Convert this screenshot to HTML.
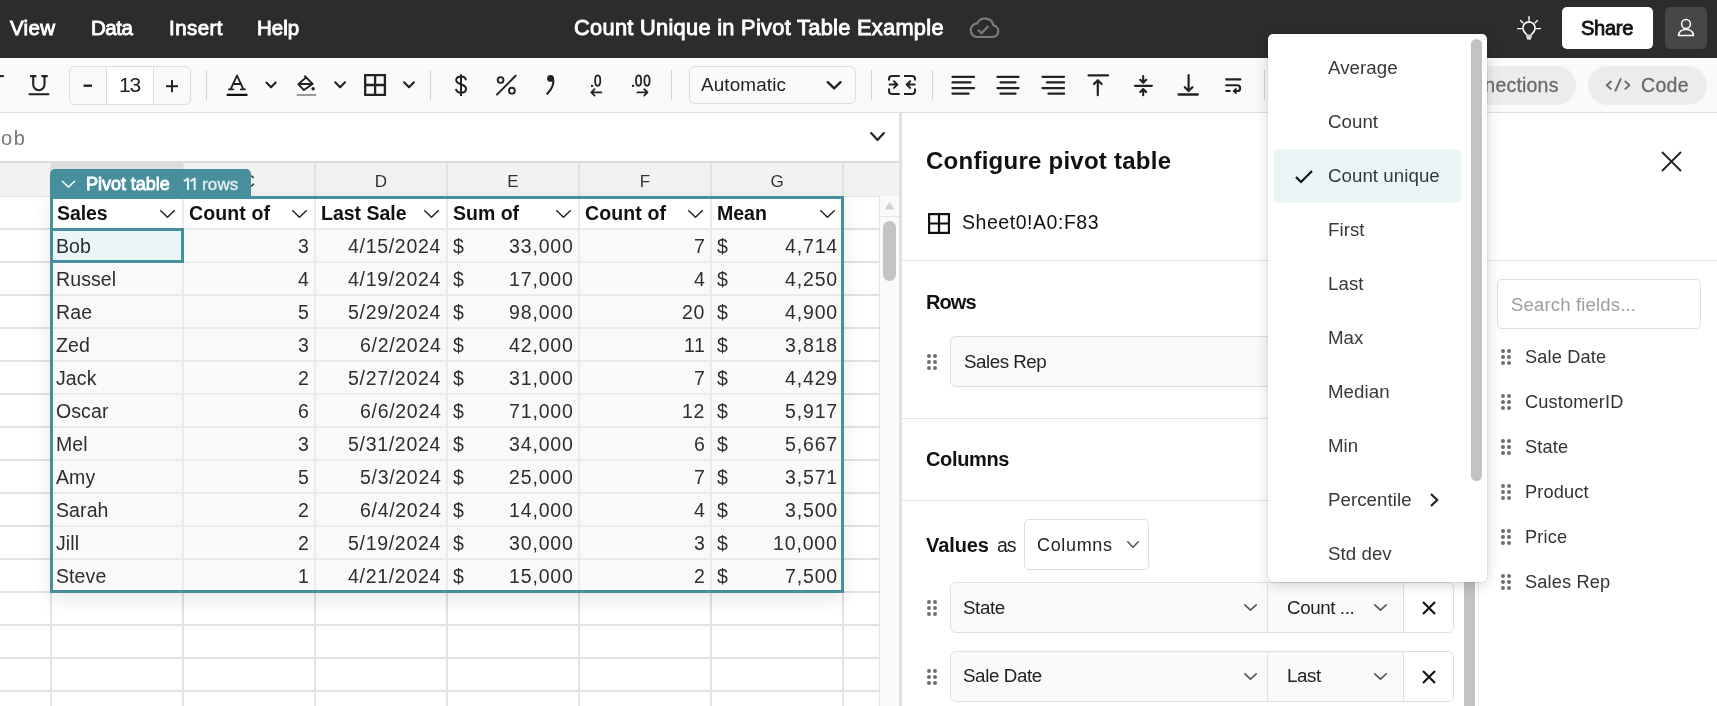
<!DOCTYPE html><html><head><meta charset="utf-8"><style>
*{margin:0;padding:0;box-sizing:border-box}
html,body{width:1717px;height:706px;overflow:hidden;background:#fff;font-family:"Liberation Sans", sans-serif;color:#1d1d1d}
.abs{position:absolute}
.t{position:absolute;white-space:nowrap;line-height:1;will-change:transform}
svg{position:absolute;overflow:visible}
</style></head><body>
<div class="abs" style="left:0px;top:0px;width:1717px;height:58px;background:#2c2c2c;"></div>
<div class="t" style="left:10.00px;top:18.00px;font-size:20.5px;color:#fff;letter-spacing:0.300px;-webkit-text-stroke:0.9px #fff">View</div>
<div class="t" style="left:91.00px;top:18.00px;font-size:20.5px;color:#fff;letter-spacing:-0.433px;-webkit-text-stroke:0.9px #fff">Data</div>
<div class="t" style="left:168.50px;top:18.00px;font-size:20.5px;color:#fff;letter-spacing:0.460px;-webkit-text-stroke:0.9px #fff">Insert</div>
<div class="t" style="left:257.00px;top:18.00px;font-size:20.5px;color:#fff;letter-spacing:-0.033px;-webkit-text-stroke:0.9px #fff">Help</div>
<div class="t" style="left:574.30px;top:17.00px;font-size:21.8px;color:#fff;letter-spacing:0.297px;-webkit-text-stroke:0.9px #fff">Count Unique in Pivot Table Example</div>
<svg style="left:0;top:0" width="1717" height="58" viewBox="0 0 1717 58"><path d="M976.5 37 H992.8 A5.9 5.9 0 0 0 993.4 25.3 A8.6 8.6 0 0 0 977.3 23.3 A6.9 6.9 0 0 0 976.5 37 Z" fill="none" stroke="#7c7c7c" stroke-width="2.2"/><path d="M978 29.8 L981.5 33.3 L988.4 26" fill="none" stroke="#7c7c7c" stroke-width="2.1"/></svg>
<div class="abs" style="left:1562px;top:7px;width:91px;height:42px;background:#fff;border-radius:5px"></div>
<div class="t" style="left:1581.00px;top:18.00px;font-size:20.2px;color:#111;letter-spacing:-0.350px;-webkit-text-stroke:0.8px #111">Share</div>
<div class="abs" style="left:1665px;top:7px;width:42px;height:42px;background:#474747;border-radius:5px"></div>
<svg style="left:0;top:0" width="1717" height="58" viewBox="0 0 1717 58"><g fill="none" stroke="#fff" stroke-width="1.6" stroke-linecap="round"><path d="M1526.6 34.6 C1524.6 32.6 1522.9 30.6 1522.9 28 A6.1 6.1 0 1 1 1535.1 28 C1535.1 30.6 1533.4 32.6 1531.4 34.6"/><path d="M1529 16.6 V20.2 M1517.6 28.6 H1521.4 M1536.6 28.6 H1540.4 M1520.6 20.6 L1522.8 22.8 M1537.4 20.6 L1535.2 22.8" stroke-width="1.4"/></g><rect x="1526.2" y="34.6" width="5.6" height="3.4" fill="#cfcfcf"/><rect x="1527" y="37.6" width="4" height="2" fill="#e8e8e8"/><g fill="none" stroke="#fff" stroke-width="1.5"><circle cx="1686" cy="24" r="4.4"/><path d="M1678.5 35.4 C1678.9 31.6 1682 29.4 1686 29.4 C1690 29.4 1693.1 31.6 1693.5 35.4 Z" stroke-linejoin="round"/></g></svg>
<div class="abs" style="left:0px;top:58px;width:1717px;height:54px;background:#fafafa;"></div>
<div class="abs" style="left:0px;top:112px;width:1717px;height:1px;background:#dedede;"></div>
<div class="abs" style="left:69px;top:66px;width:122px;height:39px;background:#f9f9f9;border:1px solid #dcdcdc;border-radius:6px"></div>
<div class="abs" style="left:106px;top:67px;width:47.5px;height:37px;background:#fff;border-left:1px solid #dcdcdc;border-right:1px solid #dcdcdc"></div>
<div class="t" style="left:118.50px;top:74.00px;font-size:21px;color:#222;letter-spacing:-1.200px">13</div>
<div class="abs" style="left:206.2px;top:70px;width:1.3px;height:30px;background:#d2d2d2;"></div>
<div class="abs" style="left:430.2px;top:70px;width:1.3px;height:30px;background:#d2d2d2;"></div>
<div class="abs" style="left:671.2px;top:70px;width:1.3px;height:30px;background:#d2d2d2;"></div>
<div class="abs" style="left:688.5px;top:66px;width:167px;height:38px;background:#fafafa;border:1px solid #dcdcdc;border-radius:6px"></div>
<div class="t" style="left:701.20px;top:76.00px;font-size:18.9px;color:#222;letter-spacing:0.125px">Automatic</div>
<div class="abs" style="left:871.2px;top:70px;width:1.3px;height:30px;background:#d2d2d2;"></div>
<div class="abs" style="left:932.2px;top:70px;width:1.3px;height:30px;background:#d2d2d2;"></div>
<div class="abs" style="left:1264.2px;top:70px;width:1.3px;height:30px;background:#d2d2d2;"></div>
<svg style="left:0;top:0" width="1717" height="113" viewBox="0 0 1717 113"><path d="M-2 76.1 H3.8" fill="none" stroke="#222" stroke-width="2.2" /><path d="M30.1 76.1 H36.4 M41.4 76.1 H47.7 M33.2 76.1 V84.6 A5.65 5.65 0 0 0 44.5 84.6 V76.1" fill="none" stroke="#222" stroke-width="2.1" /><path d="M29.4 94.2 H48.4" fill="none" stroke="#222" stroke-width="2.1" stroke-linecap="round"/><path d="M83.6 85.7 H92" fill="none" stroke="#222" stroke-width="2.4" /><path d="M166 86.2 H178 M172 80 V92.2" fill="none" stroke="#222" stroke-width="1.9" /><path d="M230.7 89.2 L237 75.6 L243.3 89.2 M233 84 H241" fill="none" stroke="#222" stroke-width="1.9" stroke-linejoin="round"/><path d="M229 89.4 H233.2 M240.8 89.4 H245" fill="none" stroke="#222" stroke-width="1.9" stroke-linecap="round"/><path d="M227.6 94.9 H246.6" fill="none" stroke="#111" stroke-width="2.2" stroke-linecap="round"/><path d="M266.4 82.6 L271.04999999999995 87.3 L275.7 82.6" fill="none" stroke="#222" stroke-width="2.1" stroke-linecap="round" stroke-linejoin="round"/><path d="M304.4 75.8 L312.6 83.9 L303.9 90.1 L298.3 84.1 L305.8 77.7 M298.3 84 H312.6" fill="none" stroke="#222" stroke-width="1.9" stroke-linejoin="round"/><circle cx="313.1" cy="88.7" r="1.7" fill="#222"/><path d="M297.5 95 H315.5" fill="none" stroke="#9a9a9a" stroke-width="2" stroke-linecap="round"/><path d="M335.2 82.3 L340.1 87.3 L345 82.3" fill="none" stroke="#222" stroke-width="2.1" stroke-linecap="round" stroke-linejoin="round"/><path d="M365.2 75.1 H384.9 V94.8 H365.2 Z M375.1 75 V95 M365 85 H385" fill="none" stroke="#222" stroke-width="2.3" /><path d="M404.1 82.3 L409.0 87.3 L413.9 82.3" fill="none" stroke="#222" stroke-width="2.1" stroke-linecap="round" stroke-linejoin="round"/><path d="M466 80.2 C465.5 77.6 463.6 76.6 461 76.6 C458 76.6 456.2 78.2 456.2 80.3 C456.2 85.3 466 83.3 466 88.9 C466 91.2 463.9 92.6 461 92.6 C458.2 92.6 456.3 91.2 456 88.8 M461 74.2 V96" fill="none" stroke="#222" stroke-width="2" /><circle cx="500.6" cy="80" r="2.9" fill="none" stroke="#222" stroke-width="1.9"/><circle cx="511.9" cy="90.7" r="2.9" fill="none" stroke="#222" stroke-width="1.9"/><path d="M497 94.6 L515.6 75.8" fill="none" stroke="#222" stroke-width="2" stroke-linecap="round"/><circle cx="550.5" cy="78.4" r="3.4" fill="#222"/><path d="M553 78 C554.5 84 552 89 547.3 93.8" fill="none" stroke="#222" stroke-width="2.1" stroke-linecap="round"/><rect x="591" y="84.8" width="2.1" height="2.1" fill="#222"/><ellipse cx="597.7" cy="80.6" rx="2.6" ry="5.3" fill="none" stroke="#222" stroke-width="1.8"/><path d="M601.3 92.4 H591.5 M594.6 89.2 L591.3 92.4 L594.6 95.6" fill="none" stroke="#222" stroke-width="1.8" stroke-linecap="round" stroke-linejoin="round"/><rect x="632" y="84.8" width="2.1" height="2.1" fill="#222"/><ellipse cx="638.6" cy="80.6" rx="2.6" ry="5.3" fill="none" stroke="#222" stroke-width="1.8"/><ellipse cx="647" cy="80.6" rx="2.6" ry="5.3" fill="none" stroke="#222" stroke-width="1.8"/><path d="M637.4 92.4 H647.4 M644.2 89.2 L647.5 92.4 L644.2 95.6" fill="none" stroke="#222" stroke-width="1.8" stroke-linecap="round" stroke-linejoin="round"/><path d="M827.8 82.2 L834.15 88.4 L840.5 82.2" fill="none" stroke="#222" stroke-width="2.4" stroke-linecap="round" stroke-linejoin="round"/><path d="M899.7 76 H892 A3 3 0 0 0 889 79 V80.5 M889 88.5 V91 A3 3 0 0 0 892 94 H899.7 M904 76 H912 A3 3 0 0 1 915 79 V80.5 M915 88.5 V91 A3 3 0 0 1 912 94 H904" fill="none" stroke="#222" stroke-width="2" /><path d="M889.6 84.6 H897.3 M894 81.3 L897.4 84.6 L894 87.9 M914.6 84.6 H906.8 M910.2 81.3 L906.7 84.6 L910.2 87.9" fill="none" stroke="#222" stroke-width="2" stroke-linecap="round" stroke-linejoin="round"/><path d="M952.5 76.8 H974" fill="none" stroke="#222" stroke-width="2.3" stroke-linecap="round"/><path d="M952.5 82.4 H970.5" fill="none" stroke="#222" stroke-width="2.3" stroke-linecap="round"/><path d="M952.5 88.1 H974" fill="none" stroke="#222" stroke-width="2.3" stroke-linecap="round"/><path d="M952.5 93.7 H968.5" fill="none" stroke="#222" stroke-width="2.3" stroke-linecap="round"/><path d="M997.5 76.8 H1018.5" fill="none" stroke="#222" stroke-width="2.3" stroke-linecap="round"/><path d="M1000.5 82.4 H1015.5" fill="none" stroke="#222" stroke-width="2.3" stroke-linecap="round"/><path d="M997.5 88.1 H1018.5" fill="none" stroke="#222" stroke-width="2.3" stroke-linecap="round"/><path d="M1000.5 93.7 H1015.5" fill="none" stroke="#222" stroke-width="2.3" stroke-linecap="round"/><path d="M1042.5 76.8 H1064" fill="none" stroke="#222" stroke-width="2.3" stroke-linecap="round"/><path d="M1047 82.4 H1064" fill="none" stroke="#222" stroke-width="2.3" stroke-linecap="round"/><path d="M1042.5 88.1 H1064" fill="none" stroke="#222" stroke-width="2.3" stroke-linecap="round"/><path d="M1048.5 93.7 H1064" fill="none" stroke="#222" stroke-width="2.3" stroke-linecap="round"/><path d="M1088.6 75.4 H1108" fill="none" stroke="#222" stroke-width="2.3" stroke-linecap="round"/><path d="M1097.8 95.2 V80.5 M1094 84 L1097.8 80.2 L1101.6 84" fill="none" stroke="#222" stroke-width="2.2" stroke-linecap="round" stroke-linejoin="round"/><path d="M1135 85.8 H1151.8" fill="none" stroke="#222" stroke-width="2.3" stroke-linecap="round"/><path d="M1143.2 76 V82.5 M1140.2 79.8 L1143.2 82.8 L1146.2 79.8 M1143.2 95.2 V89.2 M1140.2 92 L1143.2 89 L1146.2 92" fill="none" stroke="#222" stroke-width="2.1" stroke-linecap="round" stroke-linejoin="round"/><path d="M1178.6 94.5 H1197.8" fill="none" stroke="#222" stroke-width="2.3" stroke-linecap="round"/><path d="M1188.6 75 V90.8 M1184.8 87.2 L1188.6 91 L1192.4 87.2" fill="none" stroke="#222" stroke-width="2.2" stroke-linecap="round" stroke-linejoin="round"/><path d="M1226.2 79.4 H1240.4 M1226.2 85.3 H1237.3 A2.85 2.85 0 0 1 1237.3 91 H1234 M1226.2 91 H1229.8" fill="none" stroke="#222" stroke-width="2.1" stroke-linecap="round"/><path d="M1236 88.8 L1233.8 91 L1236 93.2" fill="none" stroke="#222" stroke-width="1.8" stroke-linecap="round" stroke-linejoin="round"/></svg>
<div class="abs" style="left:1380px;top:66px;width:196px;height:39px;background:#ececec;border-radius:20px"></div>
<div class="t" style="left:1448.00px;top:76.00px;font-size:19.5px;color:#6a6a6a;letter-spacing:0.200px;-webkit-text-stroke:0.3px #6a6a6a">Connections</div>
<div class="abs" style="left:1588px;top:66px;width:119px;height:39px;background:#ececec;border-radius:20px"></div>
<svg style="left:0;top:0" width="1717" height="113" viewBox="0 0 1717 113"><g fill="none" stroke="#6a6a6a" stroke-width="1.9" stroke-linejoin="round"><path d="M1611.4 81 L1606.8 85.2 L1611.4 89.4 M1624.8 81 L1629.4 85.2 L1624.8 89.4 M1621 78.4 L1615.2 91.3"/></g></svg>
<div class="t" style="left:1640.50px;top:76.00px;font-size:19.5px;color:#6a6a6a;letter-spacing:0.300px;-webkit-text-stroke:0.3px #6a6a6a">Code</div>
<div class="t" style="left:1.10px;top:128.00px;font-size:20px;color:#777;letter-spacing:1.600px">ob</div>
<svg style="left:870px;top:132px" width="15" height="9" viewBox="0 0 15 9"><path d="M1.1 1.1 L7.5 7.9 L13.9 1.1" fill="none" stroke="#222" stroke-width="2.2" stroke-linecap="round" stroke-linejoin="round"/></svg>
<div class="abs" style="left:0px;top:161px;width:899px;height:2px;background:#dcdcdc;"></div>
<div class="abs" style="left:0px;top:163px;width:899px;height:33px;background:#f2f2f2;"></div>
<div class="abs" style="left:50px;top:163px;width:132px;height:33px;background:#dcdcdc;"></div>
<div class="t" style="left:229px;width:40px;text-align:center;top:173.11px;font-size:17px;color:#333">C</div>
<div class="t" style="left:361px;width:40px;text-align:center;top:173.11px;font-size:17px;color:#333">D</div>
<div class="t" style="left:493px;width:40px;text-align:center;top:173.11px;font-size:17px;color:#333">E</div>
<div class="t" style="left:625px;width:40px;text-align:center;top:173.11px;font-size:17px;color:#333">F</div>
<div class="t" style="left:757px;width:40px;text-align:center;top:173.11px;font-size:17px;color:#333">G</div>
<div class="abs" style="left:50px;top:163px;width:1.5px;height:543px;background:#e2e2e2;"></div>
<div class="abs" style="left:182px;top:163px;width:1.5px;height:543px;background:#e2e2e2;"></div>
<div class="abs" style="left:314px;top:163px;width:1.5px;height:543px;background:#e2e2e2;"></div>
<div class="abs" style="left:446px;top:163px;width:1.5px;height:543px;background:#e2e2e2;"></div>
<div class="abs" style="left:578px;top:163px;width:1.5px;height:543px;background:#e2e2e2;"></div>
<div class="abs" style="left:710px;top:163px;width:1.5px;height:543px;background:#e2e2e2;"></div>
<div class="abs" style="left:842px;top:163px;width:1.5px;height:543px;background:#e2e2e2;"></div>
<div class="abs" style="left:0px;top:195.8px;width:879px;height:1.5px;background:#e2e2e2;"></div>
<div class="abs" style="left:0px;top:228px;width:879px;height:1.5px;background:#e2e2e2;"></div>
<div class="abs" style="left:0px;top:261px;width:879px;height:1.5px;background:#e2e2e2;"></div>
<div class="abs" style="left:0px;top:294px;width:879px;height:1.5px;background:#e2e2e2;"></div>
<div class="abs" style="left:0px;top:327px;width:879px;height:1.5px;background:#e2e2e2;"></div>
<div class="abs" style="left:0px;top:360px;width:879px;height:1.5px;background:#e2e2e2;"></div>
<div class="abs" style="left:0px;top:393px;width:879px;height:1.5px;background:#e2e2e2;"></div>
<div class="abs" style="left:0px;top:426px;width:879px;height:1.5px;background:#e2e2e2;"></div>
<div class="abs" style="left:0px;top:459px;width:879px;height:1.5px;background:#e2e2e2;"></div>
<div class="abs" style="left:0px;top:492px;width:879px;height:1.5px;background:#e2e2e2;"></div>
<div class="abs" style="left:0px;top:525px;width:879px;height:1.5px;background:#e2e2e2;"></div>
<div class="abs" style="left:0px;top:558px;width:879px;height:1.5px;background:#e2e2e2;"></div>
<div class="abs" style="left:0px;top:591px;width:879px;height:1.5px;background:#e2e2e2;"></div>
<div class="abs" style="left:0px;top:624px;width:879px;height:1.5px;background:#e2e2e2;"></div>
<div class="abs" style="left:0px;top:657px;width:879px;height:1.5px;background:#e2e2e2;"></div>
<div class="abs" style="left:0px;top:690px;width:879px;height:1.5px;background:#e2e2e2;"></div>
<div class="abs" style="left:879px;top:196px;width:20px;height:510px;background:#fafafa;border-left:1.5px solid #e2e2e2"></div>
<svg style="left:884px;top:201px" width="11" height="9" viewBox="0 0 11 9"><path d="M0.5 8.5 L5.5 1 L10.5 8.5 Z" fill="#d2d2d2"/></svg>
<div class="abs" style="left:880px;top:216px;width:19px;height:1.2px;background:#e6e6e6;"></div>
<div class="abs" style="left:883px;top:221px;width:13px;height:60px;background:#c4c4c4;border-radius:7px"></div>
<div class="abs" style="left:899px;top:113px;width:3px;height:593px;background:#e0e0e0;"></div>
<div class="abs" style="left:50px;top:196px;width:794px;height:397px;background:#f9f9f9;box-shadow:0 6px 18px rgba(0,0,0,0.10)"></div>
<div class="abs" style="left:53px;top:198px;width:788px;height:31px;background:#fff;"></div>
<div class="abs" style="left:182px;top:198px;width:1.5px;height:394px;background:#ebebeb;"></div>
<div class="abs" style="left:314px;top:198px;width:1.5px;height:394px;background:#ebebeb;"></div>
<div class="abs" style="left:446px;top:198px;width:1.5px;height:394px;background:#ebebeb;"></div>
<div class="abs" style="left:578px;top:198px;width:1.5px;height:394px;background:#ebebeb;"></div>
<div class="abs" style="left:710px;top:198px;width:1.5px;height:394px;background:#ebebeb;"></div>
<div class="abs" style="left:53px;top:261px;width:788px;height:1.5px;background:#ebebeb;"></div>
<div class="abs" style="left:53px;top:294px;width:788px;height:1.5px;background:#ebebeb;"></div>
<div class="abs" style="left:53px;top:327px;width:788px;height:1.5px;background:#ebebeb;"></div>
<div class="abs" style="left:53px;top:360px;width:788px;height:1.5px;background:#ebebeb;"></div>
<div class="abs" style="left:53px;top:393px;width:788px;height:1.5px;background:#ebebeb;"></div>
<div class="abs" style="left:53px;top:426px;width:788px;height:1.5px;background:#ebebeb;"></div>
<div class="abs" style="left:53px;top:459px;width:788px;height:1.5px;background:#ebebeb;"></div>
<div class="abs" style="left:53px;top:492px;width:788px;height:1.5px;background:#ebebeb;"></div>
<div class="abs" style="left:53px;top:525px;width:788px;height:1.5px;background:#ebebeb;"></div>
<div class="abs" style="left:53px;top:558px;width:788px;height:1.5px;background:#ebebeb;"></div>
<div class="abs" style="left:50px;top:228px;width:794px;height:1.5px;background:#ebebeb;"></div>
<div class="abs" style="left:50px;top:228px;width:133.5px;height:35px;background:#eaf5f8;border:3px solid #478f9d"></div>
<div class="abs" style="left:50px;top:196px;width:794px;height:397px;background:transparent;border:3px solid #478f9d"></div>
<div class="abs" style="left:50px;top:168.5px;width:201px;height:30px;background:#478f9d;border-radius:5px 5px 0 0"></div>
<svg style="left:61px;top:180px" width="15" height="8" viewBox="0 0 15 8"><path d="M1 1 L7.5 7 L14 1" fill="none" stroke="#fff" stroke-width="1.5"/></svg>
<div class="t" style="left:86.10px;top:175.00px;font-size:18px;color:#fff;letter-spacing:-0.035px;-webkit-text-stroke:0.85px #fff">Pivot table</div>
<svg style="left:0;top:0" width="260" height="200" viewBox="0 0 260 200"><path d="M183.8 181.2 L188 178.6 V189.9 M190.5 181.2 L194.7 178.6 V189.9" fill="none" stroke="#e6eff1" stroke-width="2.1" stroke-linejoin="round"/></svg>
<div class="t" style="left:201.70px;top:176.00px;font-size:17px;color:#e6eff1;letter-spacing:0.150px;-webkit-text-stroke:0.35px #e6eff1">rows</div>
<div class="t" style="left:56.50px;top:204.00px;font-size:19.5px;color:#111;letter-spacing:-0.100px;font-weight:bold">Sales</div>
<svg style="left:160px;top:210px" width="15" height="8" viewBox="0 0 15 8"><path d="M0.75 0.75 L7.5 7.25 L14.25 0.75" fill="none" stroke="#222" stroke-width="1.5" stroke-linecap="round" stroke-linejoin="round"/></svg>
<div class="t" style="left:188.50px;top:204.00px;font-size:19.5px;color:#111;letter-spacing:0.114px;font-weight:bold">Count of</div>
<svg style="left:292px;top:210px" width="15" height="8" viewBox="0 0 15 8"><path d="M0.75 0.75 L7.5 7.25 L14.25 0.75" fill="none" stroke="#222" stroke-width="1.5" stroke-linecap="round" stroke-linejoin="round"/></svg>
<div class="t" style="left:320.50px;top:204.00px;font-size:19.5px;color:#111;letter-spacing:0.000px;font-weight:bold">Last Sale</div>
<svg style="left:424px;top:210px" width="15" height="8" viewBox="0 0 15 8"><path d="M0.75 0.75 L7.5 7.25 L14.25 0.75" fill="none" stroke="#222" stroke-width="1.5" stroke-linecap="round" stroke-linejoin="round"/></svg>
<div class="t" style="left:452.50px;top:204.00px;font-size:19.5px;color:#111;letter-spacing:0.000px;font-weight:bold">Sum of</div>
<svg style="left:556px;top:210px" width="15" height="8" viewBox="0 0 15 8"><path d="M0.75 0.75 L7.5 7.25 L14.25 0.75" fill="none" stroke="#222" stroke-width="1.5" stroke-linecap="round" stroke-linejoin="round"/></svg>
<div class="t" style="left:584.50px;top:204.00px;font-size:19.5px;color:#111;letter-spacing:0.114px;font-weight:bold">Count of</div>
<svg style="left:688px;top:210px" width="15" height="8" viewBox="0 0 15 8"><path d="M0.75 0.75 L7.5 7.25 L14.25 0.75" fill="none" stroke="#222" stroke-width="1.5" stroke-linecap="round" stroke-linejoin="round"/></svg>
<div class="t" style="left:716.50px;top:204.00px;font-size:19.5px;color:#111;letter-spacing:0.000px;font-weight:bold">Mean</div>
<svg style="left:820px;top:210px" width="15" height="8" viewBox="0 0 15 8"><path d="M0.75 0.75 L7.5 7.25 L14.25 0.75" fill="none" stroke="#222" stroke-width="1.5" stroke-linecap="round" stroke-linejoin="round"/></svg>
<div class="t" style="left:56.00px;top:237.00px;font-size:19.5px;color:#2e2e2e;letter-spacing:0.100px">Bob</div>
<div class="t" style="right:1407.75px;top:237.00px;font-size:19.5px;color:#2e2e2e;letter-spacing:0.700px">3</div>
<div class="t" style="right:1275.95px;top:237.00px;font-size:19.5px;color:#2e2e2e;letter-spacing:0.700px">4/15/2024</div>
<div class="t" style="left:453.00px;top:237.00px;font-size:19.5px;color:#2e2e2e;letter-spacing:0.000px">$</div>
<div class="t" style="right:1143.31px;top:237.00px;font-size:19.5px;color:#2e2e2e;letter-spacing:0.850px">33,000</div>
<div class="t" style="right:1011.75px;top:237.00px;font-size:19.5px;color:#2e2e2e;letter-spacing:0.700px">7</div>
<div class="t" style="left:717.00px;top:237.00px;font-size:19.5px;color:#2e2e2e;letter-spacing:0.000px">$</div>
<div class="t" style="right:879.35px;top:237.00px;font-size:19.5px;color:#2e2e2e;letter-spacing:0.850px">4,714</div>
<div class="t" style="left:56.00px;top:270.00px;font-size:19.5px;color:#2e2e2e;letter-spacing:0.100px">Russel</div>
<div class="t" style="right:1407.75px;top:270.00px;font-size:19.5px;color:#2e2e2e;letter-spacing:0.700px">4</div>
<div class="t" style="right:1275.95px;top:270.00px;font-size:19.5px;color:#2e2e2e;letter-spacing:0.700px">4/19/2024</div>
<div class="t" style="left:453.00px;top:270.00px;font-size:19.5px;color:#2e2e2e;letter-spacing:0.000px">$</div>
<div class="t" style="right:1143.31px;top:270.00px;font-size:19.5px;color:#2e2e2e;letter-spacing:0.850px">17,000</div>
<div class="t" style="right:1011.75px;top:270.00px;font-size:19.5px;color:#2e2e2e;letter-spacing:0.700px">4</div>
<div class="t" style="left:717.00px;top:270.00px;font-size:19.5px;color:#2e2e2e;letter-spacing:0.000px">$</div>
<div class="t" style="right:879.35px;top:270.00px;font-size:19.5px;color:#2e2e2e;letter-spacing:0.850px">4,250</div>
<div class="t" style="left:56.00px;top:303.00px;font-size:19.5px;color:#2e2e2e;letter-spacing:0.100px">Rae</div>
<div class="t" style="right:1407.75px;top:303.00px;font-size:19.5px;color:#2e2e2e;letter-spacing:0.700px">5</div>
<div class="t" style="right:1275.95px;top:303.00px;font-size:19.5px;color:#2e2e2e;letter-spacing:0.700px">5/29/2024</div>
<div class="t" style="left:453.00px;top:303.00px;font-size:19.5px;color:#2e2e2e;letter-spacing:0.000px">$</div>
<div class="t" style="right:1143.31px;top:303.00px;font-size:19.5px;color:#2e2e2e;letter-spacing:0.850px">98,000</div>
<div class="t" style="right:1011.81px;top:303.00px;font-size:19.5px;color:#2e2e2e;letter-spacing:0.700px">20</div>
<div class="t" style="left:717.00px;top:303.00px;font-size:19.5px;color:#2e2e2e;letter-spacing:0.000px">$</div>
<div class="t" style="right:879.35px;top:303.00px;font-size:19.5px;color:#2e2e2e;letter-spacing:0.850px">4,900</div>
<div class="t" style="left:56.00px;top:336.00px;font-size:19.5px;color:#2e2e2e;letter-spacing:0.100px">Zed</div>
<div class="t" style="right:1407.75px;top:336.00px;font-size:19.5px;color:#2e2e2e;letter-spacing:0.700px">3</div>
<div class="t" style="right:1275.89px;top:336.00px;font-size:19.5px;color:#2e2e2e;letter-spacing:0.700px">6/2/2024</div>
<div class="t" style="left:453.00px;top:336.00px;font-size:19.5px;color:#2e2e2e;letter-spacing:0.000px">$</div>
<div class="t" style="right:1143.31px;top:336.00px;font-size:19.5px;color:#2e2e2e;letter-spacing:0.850px">42,000</div>
<div class="t" style="right:1011.76px;top:336.00px;font-size:19.5px;color:#2e2e2e;letter-spacing:0.700px">11</div>
<div class="t" style="left:717.00px;top:336.00px;font-size:19.5px;color:#2e2e2e;letter-spacing:0.000px">$</div>
<div class="t" style="right:879.35px;top:336.00px;font-size:19.5px;color:#2e2e2e;letter-spacing:0.850px">3,818</div>
<div class="t" style="left:56.00px;top:369.00px;font-size:19.5px;color:#2e2e2e;letter-spacing:0.100px">Jack</div>
<div class="t" style="right:1407.75px;top:369.00px;font-size:19.5px;color:#2e2e2e;letter-spacing:0.700px">2</div>
<div class="t" style="right:1275.95px;top:369.00px;font-size:19.5px;color:#2e2e2e;letter-spacing:0.700px">5/27/2024</div>
<div class="t" style="left:453.00px;top:369.00px;font-size:19.5px;color:#2e2e2e;letter-spacing:0.000px">$</div>
<div class="t" style="right:1143.31px;top:369.00px;font-size:19.5px;color:#2e2e2e;letter-spacing:0.850px">31,000</div>
<div class="t" style="right:1011.75px;top:369.00px;font-size:19.5px;color:#2e2e2e;letter-spacing:0.700px">7</div>
<div class="t" style="left:717.00px;top:369.00px;font-size:19.5px;color:#2e2e2e;letter-spacing:0.000px">$</div>
<div class="t" style="right:879.35px;top:369.00px;font-size:19.5px;color:#2e2e2e;letter-spacing:0.850px">4,429</div>
<div class="t" style="left:56.00px;top:402.00px;font-size:19.5px;color:#2e2e2e;letter-spacing:0.100px">Oscar</div>
<div class="t" style="right:1407.75px;top:402.00px;font-size:19.5px;color:#2e2e2e;letter-spacing:0.700px">6</div>
<div class="t" style="right:1275.89px;top:402.00px;font-size:19.5px;color:#2e2e2e;letter-spacing:0.700px">6/6/2024</div>
<div class="t" style="left:453.00px;top:402.00px;font-size:19.5px;color:#2e2e2e;letter-spacing:0.000px">$</div>
<div class="t" style="right:1143.31px;top:402.00px;font-size:19.5px;color:#2e2e2e;letter-spacing:0.850px">71,000</div>
<div class="t" style="right:1011.81px;top:402.00px;font-size:19.5px;color:#2e2e2e;letter-spacing:0.700px">12</div>
<div class="t" style="left:717.00px;top:402.00px;font-size:19.5px;color:#2e2e2e;letter-spacing:0.000px">$</div>
<div class="t" style="right:879.35px;top:402.00px;font-size:19.5px;color:#2e2e2e;letter-spacing:0.850px">5,917</div>
<div class="t" style="left:56.00px;top:435.00px;font-size:19.5px;color:#2e2e2e;letter-spacing:0.100px">Mel</div>
<div class="t" style="right:1407.75px;top:435.00px;font-size:19.5px;color:#2e2e2e;letter-spacing:0.700px">3</div>
<div class="t" style="right:1275.95px;top:435.00px;font-size:19.5px;color:#2e2e2e;letter-spacing:0.700px">5/31/2024</div>
<div class="t" style="left:453.00px;top:435.00px;font-size:19.5px;color:#2e2e2e;letter-spacing:0.000px">$</div>
<div class="t" style="right:1143.31px;top:435.00px;font-size:19.5px;color:#2e2e2e;letter-spacing:0.850px">34,000</div>
<div class="t" style="right:1011.75px;top:435.00px;font-size:19.5px;color:#2e2e2e;letter-spacing:0.700px">6</div>
<div class="t" style="left:717.00px;top:435.00px;font-size:19.5px;color:#2e2e2e;letter-spacing:0.000px">$</div>
<div class="t" style="right:879.35px;top:435.00px;font-size:19.5px;color:#2e2e2e;letter-spacing:0.850px">5,667</div>
<div class="t" style="left:56.00px;top:468.00px;font-size:19.5px;color:#2e2e2e;letter-spacing:0.100px">Amy</div>
<div class="t" style="right:1407.75px;top:468.00px;font-size:19.5px;color:#2e2e2e;letter-spacing:0.700px">5</div>
<div class="t" style="right:1275.89px;top:468.00px;font-size:19.5px;color:#2e2e2e;letter-spacing:0.700px">5/3/2024</div>
<div class="t" style="left:453.00px;top:468.00px;font-size:19.5px;color:#2e2e2e;letter-spacing:0.000px">$</div>
<div class="t" style="right:1143.31px;top:468.00px;font-size:19.5px;color:#2e2e2e;letter-spacing:0.850px">25,000</div>
<div class="t" style="right:1011.75px;top:468.00px;font-size:19.5px;color:#2e2e2e;letter-spacing:0.700px">7</div>
<div class="t" style="left:717.00px;top:468.00px;font-size:19.5px;color:#2e2e2e;letter-spacing:0.000px">$</div>
<div class="t" style="right:879.35px;top:468.00px;font-size:19.5px;color:#2e2e2e;letter-spacing:0.850px">3,571</div>
<div class="t" style="left:56.00px;top:501.00px;font-size:19.5px;color:#2e2e2e;letter-spacing:0.100px">Sarah</div>
<div class="t" style="right:1407.75px;top:501.00px;font-size:19.5px;color:#2e2e2e;letter-spacing:0.700px">2</div>
<div class="t" style="right:1275.89px;top:501.00px;font-size:19.5px;color:#2e2e2e;letter-spacing:0.700px">6/4/2024</div>
<div class="t" style="left:453.00px;top:501.00px;font-size:19.5px;color:#2e2e2e;letter-spacing:0.000px">$</div>
<div class="t" style="right:1143.31px;top:501.00px;font-size:19.5px;color:#2e2e2e;letter-spacing:0.850px">14,000</div>
<div class="t" style="right:1011.75px;top:501.00px;font-size:19.5px;color:#2e2e2e;letter-spacing:0.700px">4</div>
<div class="t" style="left:717.00px;top:501.00px;font-size:19.5px;color:#2e2e2e;letter-spacing:0.000px">$</div>
<div class="t" style="right:879.35px;top:501.00px;font-size:19.5px;color:#2e2e2e;letter-spacing:0.850px">3,500</div>
<div class="t" style="left:56.00px;top:534.00px;font-size:19.5px;color:#2e2e2e;letter-spacing:0.100px">Jill</div>
<div class="t" style="right:1407.75px;top:534.00px;font-size:19.5px;color:#2e2e2e;letter-spacing:0.700px">2</div>
<div class="t" style="right:1275.95px;top:534.00px;font-size:19.5px;color:#2e2e2e;letter-spacing:0.700px">5/19/2024</div>
<div class="t" style="left:453.00px;top:534.00px;font-size:19.5px;color:#2e2e2e;letter-spacing:0.000px">$</div>
<div class="t" style="right:1143.31px;top:534.00px;font-size:19.5px;color:#2e2e2e;letter-spacing:0.850px">30,000</div>
<div class="t" style="right:1011.75px;top:534.00px;font-size:19.5px;color:#2e2e2e;letter-spacing:0.700px">3</div>
<div class="t" style="left:717.00px;top:534.00px;font-size:19.5px;color:#2e2e2e;letter-spacing:0.000px">$</div>
<div class="t" style="right:879.31px;top:534.00px;font-size:19.5px;color:#2e2e2e;letter-spacing:0.850px">10,000</div>
<div class="t" style="left:56.00px;top:567.00px;font-size:19.5px;color:#2e2e2e;letter-spacing:0.100px">Steve</div>
<div class="t" style="right:1407.75px;top:567.00px;font-size:19.5px;color:#2e2e2e;letter-spacing:0.700px">1</div>
<div class="t" style="right:1275.95px;top:567.00px;font-size:19.5px;color:#2e2e2e;letter-spacing:0.700px">4/21/2024</div>
<div class="t" style="left:453.00px;top:567.00px;font-size:19.5px;color:#2e2e2e;letter-spacing:0.000px">$</div>
<div class="t" style="right:1143.31px;top:567.00px;font-size:19.5px;color:#2e2e2e;letter-spacing:0.850px">15,000</div>
<div class="t" style="right:1011.75px;top:567.00px;font-size:19.5px;color:#2e2e2e;letter-spacing:0.700px">2</div>
<div class="t" style="left:717.00px;top:567.00px;font-size:19.5px;color:#2e2e2e;letter-spacing:0.000px">$</div>
<div class="t" style="right:879.35px;top:567.00px;font-size:19.5px;color:#2e2e2e;letter-spacing:0.850px">7,500</div>
<div class="t" style="left:926.40px;top:149.00px;font-size:24px;color:#111;letter-spacing:0.250px;font-weight:bold">Configure pivot table</div>
<svg style="left:1661px;top:151px" width="21" height="21" viewBox="0 0 21 21"><path d="M1 1 L20 20 M20 1 L1 20" stroke="#222" stroke-width="1.8"/></svg>
<svg style="left:927.5px;top:212.5px" width="22" height="21" viewBox="0 0 22 21"><g fill="none" stroke="#111" stroke-width="2.2"><rect x="1.1" y="1.1" width="19.8" height="18.8"/><path d="M11 1 V20 M1 10.5 H21"/></g></svg>
<div class="t" style="left:962.00px;top:213.00px;font-size:19.5px;color:#111;letter-spacing:0.542px">Sheet0!A0:F83</div>
<div class="abs" style="left:902px;top:259.5px;width:815px;height:1.2px;background:#e4e4e4;"></div>
<div class="t" style="left:926.00px;top:292.00px;font-size:20px;color:#111;letter-spacing:-0.933px;font-weight:bold">Rows</div>
<svg style="left:927px;top:354px" width="11" height="16" viewBox="0 0 11 16"><g fill="#6e6e6e"><circle cx="2" cy="2" r="2"/><circle cx="8" cy="2" r="2"/><circle cx="2" cy="8" r="2"/><circle cx="8" cy="8" r="2"/><circle cx="2" cy="14" r="2"/><circle cx="8" cy="14" r="2"/></g></svg>
<div class="abs" style="left:950px;top:336px;width:503px;height:51px;background:#fafafa;border:1px solid #dedede;border-radius:6px"></div>
<div class="t" style="left:963.70px;top:353.00px;font-size:18.75px;color:#222;letter-spacing:-0.475px">Sales Rep</div>
<div class="abs" style="left:902px;top:418px;width:575px;height:1.2px;background:#e4e4e4;"></div>
<div class="t" style="left:926.00px;top:449.00px;font-size:20px;color:#111;letter-spacing:-0.350px;font-weight:bold">Columns</div>
<div class="abs" style="left:902px;top:500px;width:575px;height:1.2px;background:#e4e4e4;"></div>
<div class="t" style="left:926.00px;top:535.00px;font-size:20px;color:#111;letter-spacing:-0.080px;font-weight:bold">Values</div>
<div class="t" style="left:997.00px;top:536.00px;font-size:19.5px;color:#222;letter-spacing:-1.100px">as</div>
<div class="abs" style="left:1023.5px;top:519px;width:125px;height:51px;background:#fff;border:1px solid #dedede;border-radius:5px"></div>
<div class="t" style="left:1037.00px;top:536.00px;font-size:18px;color:#222;letter-spacing:0.667px">Columns</div>
<svg style="left:1127px;top:541px" width="12" height="7" viewBox="0 0 12 7"><path d="M0.8 0.8 L6.0 6.2 L11.2 0.8" fill="none" stroke="#555" stroke-width="1.6" stroke-linecap="round" stroke-linejoin="round"/></svg>
<svg style="left:927px;top:599.5px" width="11" height="16" viewBox="0 0 11 16"><g fill="#6e6e6e"><circle cx="2" cy="2" r="2"/><circle cx="8" cy="2" r="2"/><circle cx="2" cy="8" r="2"/><circle cx="8" cy="8" r="2"/><circle cx="2" cy="14" r="2"/><circle cx="8" cy="14" r="2"/></g></svg>
<div class="abs" style="left:950px;top:582px;width:504px;height:51px;background:#fafafa;border:1px solid #dedede;border-radius:6px"></div>
<div class="abs" style="left:1267px;top:582px;width:1px;height:51px;background:#e2e2e2;"></div>
<div class="abs" style="left:1403px;top:583px;width:50px;height:49px;background:#fff;border-left:1px solid #e2e2e2;border-radius:0 5px 5px 0"></div>
<div class="t" style="left:963.30px;top:599.00px;font-size:18.75px;color:#222;letter-spacing:-0.400px">State</div>
<svg style="left:1244px;top:604px" width="13" height="7" viewBox="0 0 13 7"><path d="M0.8 0.8 L6.5 6.2 L12.2 0.8" fill="none" stroke="#555" stroke-width="1.6" stroke-linecap="round" stroke-linejoin="round"/></svg>
<div class="t" style="left:1286.50px;top:599.00px;font-size:18.75px;color:#222;letter-spacing:-0.400px">Count ...</div>
<svg style="left:1374px;top:604px" width="13" height="7" viewBox="0 0 13 7"><path d="M0.8 0.8 L6.5 6.2 L12.2 0.8" fill="none" stroke="#555" stroke-width="1.6" stroke-linecap="round" stroke-linejoin="round"/></svg>
<svg style="left:1421.5px;top:600.5px" width="14" height="14" viewBox="0 0 14 14"><path d="M1 1 L13 13 M13 1 L1 13" stroke="#111" stroke-width="2.1"/></svg>
<svg style="left:927px;top:668.5px" width="11" height="16" viewBox="0 0 11 16"><g fill="#6e6e6e"><circle cx="2" cy="2" r="2"/><circle cx="8" cy="2" r="2"/><circle cx="2" cy="8" r="2"/><circle cx="8" cy="8" r="2"/><circle cx="2" cy="14" r="2"/><circle cx="8" cy="14" r="2"/></g></svg>
<div class="abs" style="left:950px;top:651px;width:504px;height:51px;background:#fafafa;border:1px solid #dedede;border-radius:6px"></div>
<div class="abs" style="left:1267px;top:651px;width:1px;height:51px;background:#e2e2e2;"></div>
<div class="abs" style="left:1403px;top:652px;width:50px;height:49px;background:#fff;border-left:1px solid #e2e2e2;border-radius:0 5px 5px 0"></div>
<div class="t" style="left:963.30px;top:667.00px;font-size:18.75px;color:#222;letter-spacing:-0.400px">Sale Date</div>
<svg style="left:1244px;top:673px" width="13" height="7" viewBox="0 0 13 7"><path d="M0.8 0.8 L6.5 6.2 L12.2 0.8" fill="none" stroke="#555" stroke-width="1.6" stroke-linecap="round" stroke-linejoin="round"/></svg>
<div class="t" style="left:1286.50px;top:667.00px;font-size:18.75px;color:#222;letter-spacing:-0.400px">Last</div>
<svg style="left:1374px;top:673px" width="13" height="7" viewBox="0 0 13 7"><path d="M0.8 0.8 L6.5 6.2 L12.2 0.8" fill="none" stroke="#555" stroke-width="1.6" stroke-linecap="round" stroke-linejoin="round"/></svg>
<svg style="left:1421.5px;top:669.5px" width="14" height="14" viewBox="0 0 14 14"><path d="M1 1 L13 13 M13 1 L1 13" stroke="#111" stroke-width="2.1"/></svg>
<div class="abs" style="left:1464px;top:420px;width:10.5px;height:286px;background:#c2c2c2;"></div>
<div class="abs" style="left:1477.5px;top:260px;width:1px;height:446px;background:#ececec;"></div>
<div class="abs" style="left:1497px;top:279px;width:204px;height:50px;background:#fff;border:1px solid #dedede;border-radius:5px"></div>
<div class="t" style="left:1511.40px;top:296.00px;font-size:18.5px;color:#9e9e9e;letter-spacing:0.173px">Search fields...</div>
<svg style="left:1501px;top:348.9px" width="11" height="16" viewBox="0 0 11 16"><g fill="#6e6e6e"><circle cx="2" cy="2" r="2"/><circle cx="8" cy="2" r="2"/><circle cx="2" cy="8" r="2"/><circle cx="8" cy="8" r="2"/><circle cx="2" cy="14" r="2"/><circle cx="8" cy="14" r="2"/></g></svg>
<div class="t" style="left:1524.70px;top:348.00px;font-size:18.2px;color:#333;letter-spacing:0.150px">Sale Date</div>
<svg style="left:1501px;top:393.9px" width="11" height="16" viewBox="0 0 11 16"><g fill="#6e6e6e"><circle cx="2" cy="2" r="2"/><circle cx="8" cy="2" r="2"/><circle cx="2" cy="8" r="2"/><circle cx="8" cy="8" r="2"/><circle cx="2" cy="14" r="2"/><circle cx="8" cy="14" r="2"/></g></svg>
<div class="t" style="left:1524.70px;top:393.00px;font-size:18.2px;color:#333;letter-spacing:0.150px">CustomerID</div>
<svg style="left:1501px;top:438.9px" width="11" height="16" viewBox="0 0 11 16"><g fill="#6e6e6e"><circle cx="2" cy="2" r="2"/><circle cx="8" cy="2" r="2"/><circle cx="2" cy="8" r="2"/><circle cx="8" cy="8" r="2"/><circle cx="2" cy="14" r="2"/><circle cx="8" cy="14" r="2"/></g></svg>
<div class="t" style="left:1524.70px;top:438.00px;font-size:18.2px;color:#333;letter-spacing:0.150px">State</div>
<svg style="left:1501px;top:483.9px" width="11" height="16" viewBox="0 0 11 16"><g fill="#6e6e6e"><circle cx="2" cy="2" r="2"/><circle cx="8" cy="2" r="2"/><circle cx="2" cy="8" r="2"/><circle cx="8" cy="8" r="2"/><circle cx="2" cy="14" r="2"/><circle cx="8" cy="14" r="2"/></g></svg>
<div class="t" style="left:1524.70px;top:483.00px;font-size:18.2px;color:#333;letter-spacing:0.150px">Product</div>
<svg style="left:1501px;top:528.9px" width="11" height="16" viewBox="0 0 11 16"><g fill="#6e6e6e"><circle cx="2" cy="2" r="2"/><circle cx="8" cy="2" r="2"/><circle cx="2" cy="8" r="2"/><circle cx="8" cy="8" r="2"/><circle cx="2" cy="14" r="2"/><circle cx="8" cy="14" r="2"/></g></svg>
<div class="t" style="left:1524.70px;top:528.00px;font-size:18.2px;color:#333;letter-spacing:0.150px">Price</div>
<svg style="left:1501px;top:573.9px" width="11" height="16" viewBox="0 0 11 16"><g fill="#6e6e6e"><circle cx="2" cy="2" r="2"/><circle cx="8" cy="2" r="2"/><circle cx="2" cy="8" r="2"/><circle cx="8" cy="8" r="2"/><circle cx="2" cy="14" r="2"/><circle cx="8" cy="14" r="2"/></g></svg>
<div class="t" style="left:1524.70px;top:573.00px;font-size:18.2px;color:#333;letter-spacing:0.150px">Sales Rep</div>
<div class="abs" style="left:1268px;top:34px;width:219px;height:548px;background:#fff;border-radius:5px;box-shadow:0 3px 14px rgba(0,0,0,0.16),0 0 2px rgba(0,0,0,0.22)"></div>
<div class="abs" style="left:1274px;top:149px;width:187px;height:54px;background:#eaf5f8;border-radius:5px"></div>
<div class="abs" style="left:1471px;top:39px;width:11px;height:442px;background:#c2c2c2;border-radius:6px"></div>
<div class="t" style="left:1327.80px;top:59.00px;font-size:18.7px;color:#383838;letter-spacing:0.050px">Average</div>
<div class="t" style="left:1327.80px;top:113.00px;font-size:18.7px;color:#383838;letter-spacing:0.050px">Count</div>
<div class="t" style="left:1327.80px;top:167.00px;font-size:18.7px;color:#383838;letter-spacing:0.050px">Count unique</div>
<div class="t" style="left:1327.80px;top:221.00px;font-size:18.7px;color:#383838;letter-spacing:0.050px">First</div>
<div class="t" style="left:1327.80px;top:275.00px;font-size:18.7px;color:#383838;letter-spacing:0.050px">Last</div>
<div class="t" style="left:1327.80px;top:329.00px;font-size:18.7px;color:#383838;letter-spacing:0.050px">Max</div>
<div class="t" style="left:1327.80px;top:383.00px;font-size:18.7px;color:#383838;letter-spacing:0.050px">Median</div>
<div class="t" style="left:1327.80px;top:437.00px;font-size:18.7px;color:#383838;letter-spacing:0.050px">Min</div>
<div class="t" style="left:1327.80px;top:491.00px;font-size:18.7px;color:#383838;letter-spacing:0.050px">Percentile</div>
<div class="t" style="left:1327.80px;top:545.00px;font-size:18.7px;color:#383838;letter-spacing:0.050px">Std dev</div>
<svg style="left:1294.6px;top:169.5px" width="18" height="14" viewBox="0 0 18 14"><path d="M1 7 L6 12 L17 1" fill="none" stroke="#111" stroke-width="2.2"/></svg>
<svg style="left:1429px;top:491px" width="9" height="16" viewBox="0 0 9 16"><path d="M2 3 L8.2 9 L2 15" fill="none" stroke="#222" stroke-width="2.2"/></svg>
</body></html>
